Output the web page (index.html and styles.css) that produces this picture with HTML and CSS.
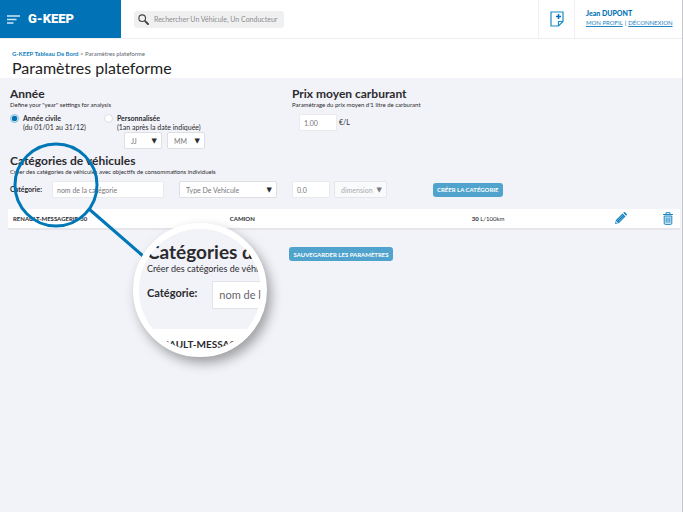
FILE: index.html
```html
<!DOCTYPE html>
<html lang="fr">
<head>
  <meta charset="UTF-8"/>
  <meta name="viewport" content="width=device-width, initial-scale=1">
  <title>G-KEEP - Paramètres plateforme</title>
  <link rel="stylesheet" href="styles.css">
</head>
<body>

  <header class="topbar">
    <div class="brand">
      <button class="menu-btn" type="button" aria-label="Menu">
        <svg width="13" height="9" viewBox="0 0 13 9" stroke="#cfe8f8" stroke-width="1.3">
          <path d="M0 1h13M0 4.500h9.500M0 8h6.500"/>
        </svg>
      </button>
      <a class="logo" href="#">G-KEEP</a>
    </div>
    <form class="search">
      <svg width="11" height="11" viewBox="0 0 11 11" fill="none" stroke="#444">
        <circle cx="4.200" cy="4.200" r="3.300" stroke-width="1.1"/>
        <path d="M6.700 6.700l1 1" stroke-width="1.100"/>
        <path d="M7.600 7.600l2.400 2.400" stroke-width="2" stroke-linecap="round"/>
      </svg>
      <input type="text" aria-label="Rechercher" placeholder="Rechercher Un Véhicule, Un Conducteur">
    </form>
    <a class="note" href="#" aria-label="Nouvelle note">
      <svg width="14" height="16" viewBox="0 0 14 16" fill="none" stroke="#1a8bc4" stroke-width="1.200">
        <path d="M1 1h12v9.500L8.500 15H1z"/>
        <path d="M8.500 15v-4.500H13"/>
        <path d="M8.500 3v5M6 5.500h5" stroke="#0072b8" stroke-width="1.500"/>
      </svg>
    </a>
    <div class="user">
      <strong class="user-name">Jean DUPONT</strong>
      <div class="user-links">
        <a href="#">MON PROFIL</a><span class="sep">|</span><a href="#">DÉCONNEXION</a>
      </div>
    </div>
  </header>

  <div class="page-head">
    <nav class="breadcrumbs"><a href="#">G-KEEP Tableau De Bord</a> &gt; Paramètres plateforme</nav>
    <h1>Paramètres plateforme</h1>
  </div>

  <main>
    <div class="settings">
      <section>
        <h2>Année</h2>
        <p class="hint">Define your "year" settings for analysis</p>
        <div class="years">
          <div class="year">
            <input type="radio" name="year" id="civil" checked>
            <label for="civil"><b>Année civile</b><br>(du 01/01 au 31/12)</label>
          </div>
          <div class="year">
            <input type="radio" name="year" id="custom">
            <div>
              <label for="custom"><b>Personnalisée</b><br>(1an après la date indiquée)</label>
              <div class="dates">
                <span class="select"><select aria-label="Jour"><option>JJ</option></select></span>
                <span class="select"><select aria-label="Mois"><option>MM</option></select></span>
              </div>
            </div>
          </div>
        </div>
      </section>

      <section>
        <h2>Prix moyen carburant</h2>
        <p class="hint">Paramétrage du prix moyen d'1 litre de carburant</p>
        <div class="price">
          <input class="field short" type="text" id="price" value="1.00">
          <label for="price">€/L</label>
        </div>
      </section>
    </div>

    <section class="categories">
      <h2>Catégories de véhicules</h2>
      <p class="hint">Créer des catégories de véhicules avec objectifs de consommations individuels</p>
      <form class="category-form">
        <div class="form-part">
          <label for="category"><b>Catégorie:</b></label>
          <input class="field name" type="text" id="category" placeholder="nom de la catégorie">
          <span class="select type"><select aria-label="Type de véhicule"><option>Type De Vehicule</option></select></span>
        </div>
        <div class="form-part values">
          <input class="field short" type="text" aria-label="Objectif" value="0.0">
          <span class="select dimension"><select aria-label="Dimension"><option>dimension</option></select></span>
          <button class="btn create" type="button">CRÉER LA CATÉGORIE</button>
        </div>
      </form>
    </section>

    <table class="list">
      <tbody>
        <tr>
          <td class="col-name"><b>RENAULT-MESSAGERIE-30</b></td>
          <td class="col-type"><b>CAMION</b></td>
          <td class="col-goal"><b>30</b> L/100km</td>
          <td class="col-actions">
            <div class="actions">
              <button class="icon-btn" type="button" aria-label="Modifier">
                <svg width="13" height="13" viewBox="0 0 13 13">
                  <path d="M1 12l1-4 6.500-6.500 3 3L5 11z" fill="#1280bd"/>
                  <path d="M9.200 .8l.6-.6q.6-.4 1.200.1l1.700 1.700q.5.600 0 1.200l-.6.600z" fill="#1280bd"/>
                  <path d="M3.300 8.600l5.400-5.400M4.500 9.800l5.400-5.400" stroke="#a9d3ea" stroke-width=".6"/>
                  <path d="M2.400 9l1.600 1.600-1.900.500z" fill="#fff"/>
                </svg>
              </button>
              <button class="icon-btn" type="button" aria-label="Supprimer">
                <svg width="10" height="13" viewBox="0 0 10 13" fill="none" stroke="#1e86bf">
                  <path d="M0 2.500h10M3 2.200V.7h4v1.500"/>
                  <path d="M1.200 4v7.200q0 1.200 1.200 1.200h5.200q1.200 0 1.200-1.200V4z" fill="#d3e9f5"/>
                  <path d="M3.200 5.500v5.200M5 5.500v5.200M6.800 5.500v5.200" stroke-width=".9"/>
                </svg>
              </button>
            </div>
          </td>
        </tr>
      </tbody>
    </table>

    <div class="save">
      <button class="btn" type="button">SAUVEGARDER LES PARAMÈTRES</button>
    </div>
  </main>

  <!-- magnifier over the category form -->
  <svg class="pointer" width="150" height="130" viewBox="0 0 150 130" fill="none" stroke="#0077b6" stroke-width="3">
    <circle cx="56" cy="50" r="41"/>
    <path d="M89 74l54 47"/>
  </svg>
  <div class="lens" aria-hidden="true">
    <div class="lens-title">Catégories de véhicules</div>
    <div class="lens-hint">Créer des catégories de véhicules</div>
    <div class="lens-form"><b>Catégorie:</b><span class="lens-field">nom de la catégorie</span></div>
    <div class="lens-row">RENAULT-MESSAGERIE-30</div>
  </div>

</body>
</html>
```
FILE: styles.css
```css
* {
  box-sizing: border-box;
}

body {
  position: relative;
  margin: 0;
  min-height: 100vh;
  border-right: 1px solid #c6c6ca;
  background: #f2f3f8;
  color: #2b2b2f;
  font-family: Lato, "Liberation Sans", sans-serif;
  font-size: 7px;
  line-height: 9px;
}

h1, h2, p {
  margin: 0;
}

input, select, button {
  font-family: inherit;
  margin: 0;
}

/* top bar */
.topbar {
  display: flex;
  height: 39px;
  margin-right: -1px;
  background: #fff;
  border-bottom: 1px solid #eeeef1;
}

.brand {
  display: flex;
  align-items: center;
  gap: 8px;
  width: 121px;
  padding-left: 7px;
  background: #0072b5;
}

.menu-btn, .icon-btn {
  display: flex;
  padding: 0;
  border: none;
  background: none;
  cursor: pointer;
}

.logo {
  color: #fff;
  font-family: Roboto, Lato, sans-serif;
  font-size: 13px;
  font-weight: 900;
  line-height: 16px;
  text-decoration: none;
}

.search {
  display: flex;
  align-items: center;
  align-self: center;
  gap: 5px;
  width: 150px;
  height: 17px;
  margin-left: 13px;
  padding-left: 4px;
  border-radius: 3px;
  background: #f0f0f1;
}

.search input {
  flex: 1;
  min-width: 0;
  padding: 0;
  border: none;
  outline: none;
  background: none;
  font-size: 7px;
}

.search input::placeholder {
  color: #8c8c90;
}

.note {
  display: flex;
  align-items: center;
  justify-content: center;
  width: 37px;
  margin-left: auto;
  border-left: 1px solid #f0f0f2;
  border-right: 1px solid #f0f0f2;
}

.user {
  width: 108px;
  padding: 8px 0 0 11px;
  color: #0072b5;
}

.user-name {
  display: block;
  font-weight: 900;
  line-height: 10px;
}

.user-links {
  display: flex;
  font-size: 6px;
  line-height: 10px;
}

.user-links a {
  color: #2584c0;
}

.sep {
  margin: 0 2px;
}

/* page heading */
.page-head {
  padding: 11px 12px 0;
  background: #fff;
}

.breadcrumbs {
  font-size: 6px;
  line-height: 8px;
  color: #5c6470;
}

.breadcrumbs a {
  color: #1482c0;
  font-weight: bold;
  text-decoration: none;
}

h1 {
  font-size: 16px;
  font-weight: normal;
  line-height: 20px;
  color: #222;
}

h2 {
  font-size: 12px;
  line-height: 14px;
}

.hint {
  font-size: 6px;
  line-height: 8px;
}

/* settings */
.settings, .category-form {
  display: grid;
  grid-template-columns: 3fr 4fr;
}

.settings {
  padding: 9px 14px 0 10px;
}

.years {
  display: flex;
  gap: 18px;
  margin-top: 5px;
}

.year {
  display: flex;
  align-items: flex-start;
  gap: 4px;
}

.year input {
  appearance: none;
  width: 9px;
  height: 9px;
  border: 1px solid #dcdde2;
  border-radius: 50%;
  background: #fff;
}

.year input:checked {
  border-color: #7db8dc;
  background: radial-gradient(circle, #0072b5 50%, #fff 65%);
}

.dates {
  display: flex;
  gap: 5px;
  padding-left: 7px;
}

.dates .select {
  width: 38px;
}

.field, select {
  height: 17px;
  border: 1px solid #e9eaee;
  border-radius: 1px;
  outline: none;
  background: #fff;
  color: #77777b;
  font-size: 7px;
}

.field {
  padding: 0 4px;
}

.field::placeholder {
  color: #77777b;
}

.short {
  width: 38px;
}

.select {
  position: relative;
  display: block;
}

select {
  appearance: none;
  display: block;
  width: 100%;
  padding: 0 6px;
  border-color: #dedfe3;
  border-radius: 2px;
}

.select::after {
  content: "▼";
  position: absolute;
  top: 5px;
  right: 5px;
  font-family: "DejaVu Sans", sans-serif;
  font-size: 7px;
  line-height: 9px;
  pointer-events: none;
}

.price {
  display: flex;
  align-items: center;
  gap: 2px;
  margin-top: 5px;
  padding-left: 7px;
}

/* categories */
.categories {
  padding: 5px 14px 0 10px;
}

.category-form {
  margin-top: 5px;
}

.form-part {
  display: flex;
  align-items: center;
}

.form-part label {
  flex: none;
  width: 42px;
}

.name {
  width: 112px;
}

.type {
  width: 98px;
  margin-left: 15px;
}

.dimension {
  width: 53px;
  margin-left: 4px;
  opacity: 0.6;
}

.btn {
  height: 14px;
  padding: 0 4px;
  border: none;
  border-radius: 3px;
  background: #4fa3cc;
  color: #fff;
  font-size: 6px;
  font-weight: bold;
  cursor: pointer;
}

.create {
  margin-left: 46px;
}

.list {
  width: calc(100% - 10px);
  margin: 11px 2px 0 8px;
  border-collapse: collapse;
  table-layout: fixed;
  background: #fff;
  border-bottom: 2px solid #e6e6ea;
  font-size: 6px;
}

.list td {
  height: 20px;
  padding: 0;
}

.list .col-name {
  width: 33%;
  padding-left: 5px;
}

.list .col-type {
  width: 36%;
}

.actions {
  display: flex;
  justify-content: flex-end;
  align-items: center;
  gap: 36px;
  padding-right: 7px;
}

.save {
  display: flex;
  justify-content: center;
  padding-top: 17px;
}

/* magnifier */
.pointer {
  position: absolute;
  top: 135px;
  left: 0;
  pointer-events: none;
}

.lens {
  position: absolute;
  top: 223px;
  left: 133px;
  width: 134px;
  height: 134px;
  padding-top: 13px;
  border: 6px solid #fff;
  border-radius: 50%;
  overflow: hidden;
  background: #f2f3f8;
  box-shadow: 4px 6px 12px rgba(0, 0, 0, 0.35);
  white-space: nowrap;
}

.lens-title {
  padding-left: 8px;
  font-size: 19px;
  font-weight: bold;
  line-height: 20px;
}

.lens-hint {
  padding-left: 8px;
  font-size: 9px;
  line-height: 14px;
}

.lens-form {
  display: flex;
  padding: 5px 0 0 8px;
  font-size: 11px;
  line-height: 24px;
}

.lens-field {
  margin-left: 15px;
  padding: 1px 6px;
  border: 1px solid #e3e4ea;
  background: #fff;
  color: #66666a;
}

.lens-row {
  height: 30px;
  margin-top: 20px;
  padding-left: 10px;
  background: #fff;
  font-size: 10px;
  font-weight: bold;
  line-height: 30px;
}
```
